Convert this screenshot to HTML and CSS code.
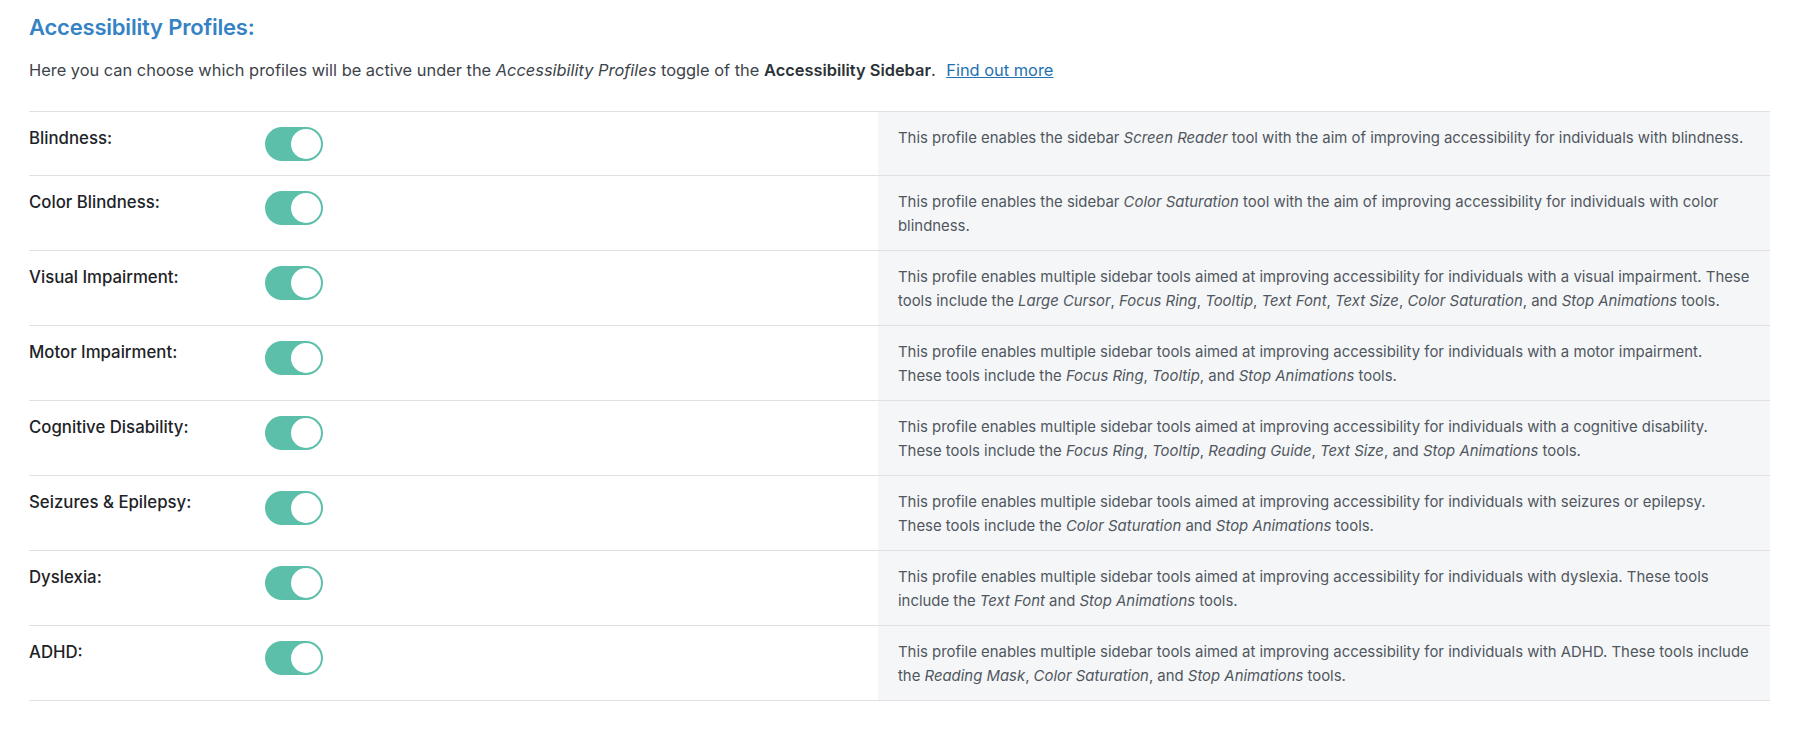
FILE: index.html
```html
<!DOCTYPE html>
<html>
<head>
<meta charset="utf-8">
<link rel="stylesheet" href="styles.css">
</head>
<body>
<div class="page">
  <h2 class="title">Accessibility Profiles:</h2>
  <p class="intro">Here you can choose which profiles will be active under the <em>Accessibility Profiles</em> toggle of the <strong>Accessibility Sidebar</strong>. <a href="#" class="more">Find out more</a></p>
  <div class="table">
    <div class="row">
      <div class="label">Blindness:</div>
      <div class="control"><span class="toggle"><span class="knob"></span></span></div>
      <div class="desc">This profile enables the sidebar <em>Screen Reader</em> tool with the aim of improving accessibility for individuals with blindness.</div>
    </div>
    <div class="row">
      <div class="label">Color Blindness:</div>
      <div class="control"><span class="toggle"><span class="knob"></span></span></div>
      <div class="desc">This profile enables the sidebar <em>Color Saturation</em> tool with the aim of improving accessibility for individuals with color<br>blindness.</div>
    </div>
    <div class="row">
      <div class="label">Visual Impairment:</div>
      <div class="control"><span class="toggle"><span class="knob"></span></span></div>
      <div class="desc">This profile enables multiple sidebar tools aimed at improving accessibility for individuals with a visual impairment. These<br>tools include the <em>Large Cursor</em>, <em>Focus Ring</em>, <em>Tooltip</em>, <em>Text Font</em>, <em>Text Size</em>, <em>Color Saturation</em>, and <em>Stop Animations</em> tools.</div>
    </div>
    <div class="row">
      <div class="label">Motor Impairment:</div>
      <div class="control"><span class="toggle"><span class="knob"></span></span></div>
      <div class="desc">This profile enables multiple sidebar tools aimed at improving accessibility for individuals with a motor impairment.<br>These tools include the <em>Focus Ring</em>, <em>Tooltip</em>, and <em>Stop Animations</em> tools.</div>
    </div>
    <div class="row">
      <div class="label">Cognitive Disability:</div>
      <div class="control"><span class="toggle"><span class="knob"></span></span></div>
      <div class="desc">This profile enables multiple sidebar tools aimed at improving accessibility for individuals with a cognitive disability.<br>These tools include the <em>Focus Ring</em>, <em>Tooltip</em>, <em>Reading Guide</em>, <em>Text Size</em>, and <em>Stop Animations</em> tools.</div>
    </div>
    <div class="row">
      <div class="label">Seizures &amp; Epilepsy:</div>
      <div class="control"><span class="toggle"><span class="knob"></span></span></div>
      <div class="desc">This profile enables multiple sidebar tools aimed at improving accessibility for individuals with seizures or epilepsy.<br>These tools include the <em>Color Saturation</em> and <em>Stop Animations</em> tools.</div>
    </div>
    <div class="row">
      <div class="label">Dyslexia:</div>
      <div class="control"><span class="toggle"><span class="knob"></span></span></div>
      <div class="desc">This profile enables multiple sidebar tools aimed at improving accessibility for individuals with dyslexia. These tools<br>include the <em>Text Font</em> and <em>Stop Animations</em> tools.</div>
    </div>
    <div class="row">
      <div class="label">ADHD:</div>
      <div class="control"><span class="toggle"><span class="knob"></span></span></div>
      <div class="desc">This profile enables multiple sidebar tools aimed at improving accessibility for individuals with ADHD. These tools include<br>the <em>Reading Mask</em>, <em>Color Saturation</em>, and <em>Stop Animations</em> tools.</div>
    </div>
  </div>
</div>
</body>
</html>
```

FILE: styles.css
```css
html, body {
  margin: 0;
  padding: 0;
  background: #ffffff;
}
body {
  font-family: Inter, "Noto Sans", "Liberation Sans", sans-serif;
  color: #3c434a;
}
.page {
  padding: 13px 30px 0 29px;
}
.title {
  margin: 0;
  font-size: 22px;
  line-height: 28px;
  font-weight: 600;
  color: #3582c4;
  letter-spacing: -0.2px;
}
.intro {
  margin: 17px 0 0 0;
  font-size: 16.4px;
  line-height: 24px;
  color: #3c434a;
}
.intro strong {
  font-weight: 600;
  color: #2c3338;
}
.more {
  color: #2271b1;
  text-decoration: underline;
  margin-left: 6px;
}
.table {
  margin-top: 29px;
  border-top: 1px solid #e0e0e2;
}
.row {
  display: flex;
  border-bottom: 1px solid #e0e0e2;
}
.label {
  width: 236px;
  flex: none;
  padding-top: 14px;
  font-size: 16.8px;
  line-height: 24px;
  font-weight: 500;
  color: #1d2327;
}
.control {
  width: 613px;
  flex: none;
  padding: 15px 0 14px 0;
}
.toggle {
  display: flex;
  justify-content: flex-end;
  align-items: center;
  width: 58px;
  height: 34px;
  box-sizing: border-box;
  padding: 2px;
  border-radius: 17px;
  background: #5cbfa9;
}
.knob {
  width: 30px;
  height: 30px;
  border-radius: 50%;
  background: #ffffff;
}
.desc {
  flex: 1;
  background: #f5f6f8;
  padding: 14px 6px 12px 20px;
  font-size: 14.9px;
  line-height: 24px;
  color: #50575e;
  white-space: nowrap;
}
```
